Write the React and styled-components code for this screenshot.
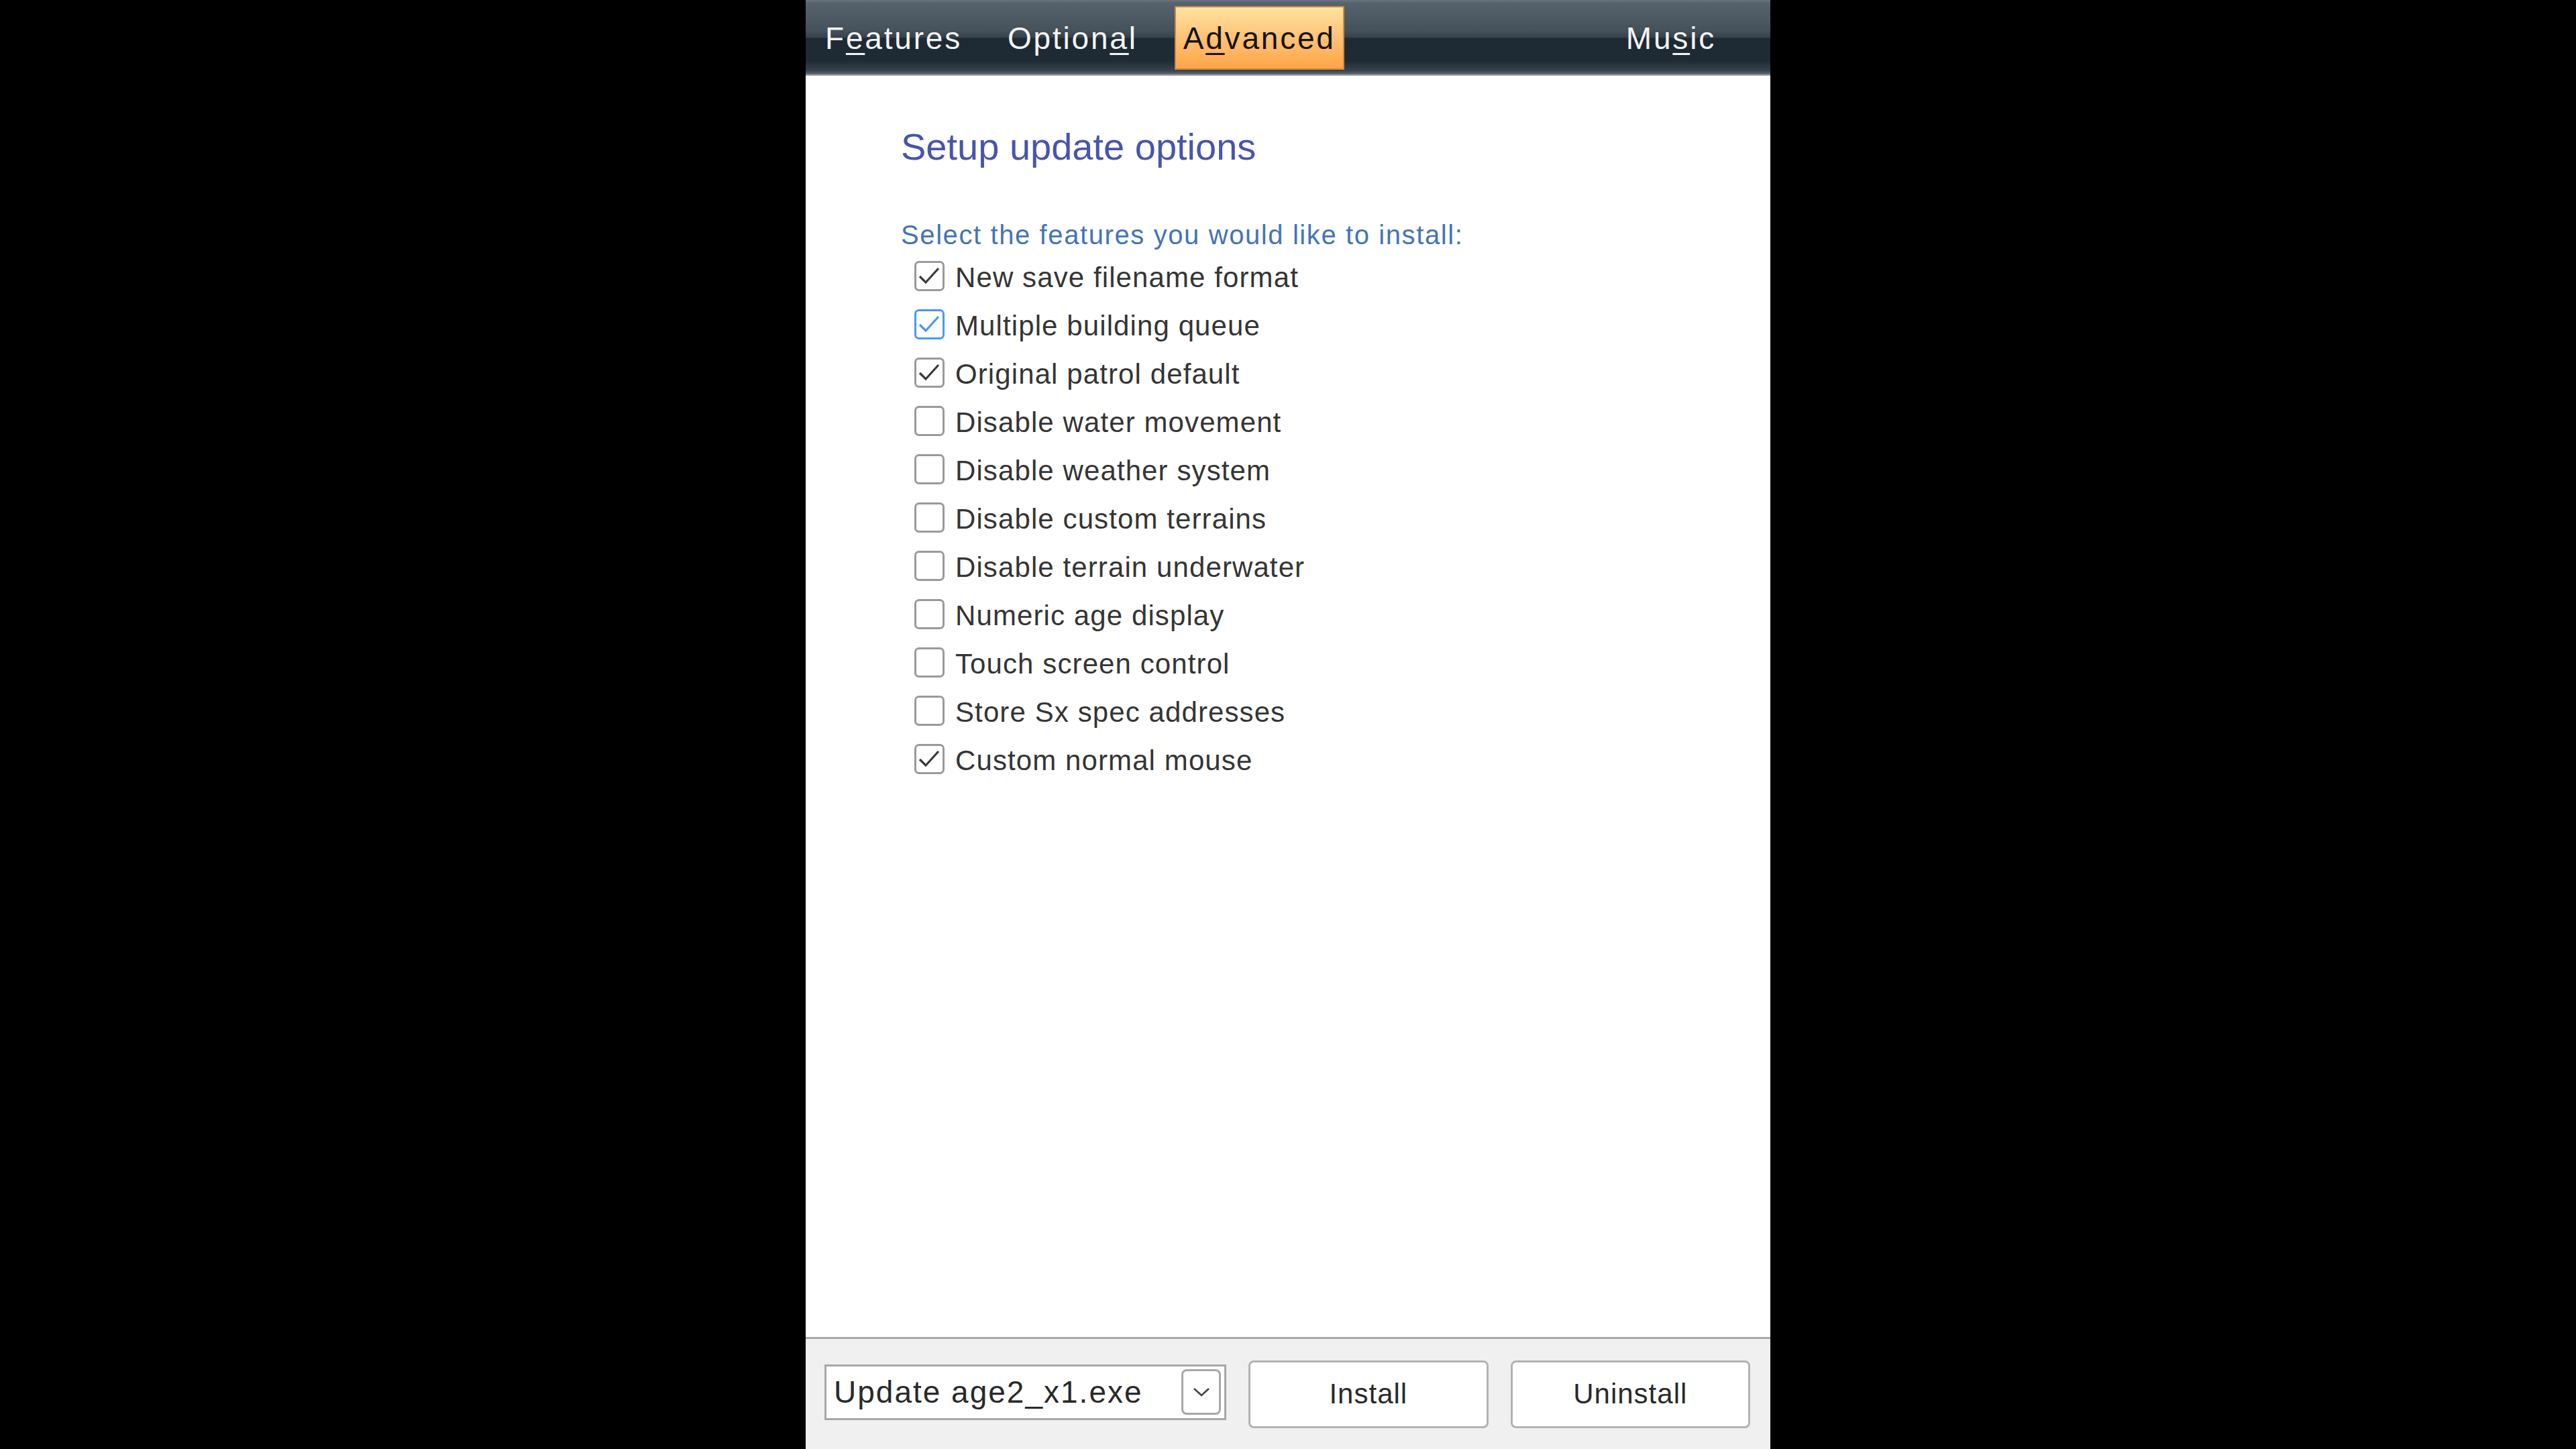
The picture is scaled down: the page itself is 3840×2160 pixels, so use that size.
import React from 'react';
import styled, { createGlobalStyle } from 'styled-components';

const GlobalStyle = createGlobalStyle`
  html, body {
    margin: 0;
    background: #000;
  }
`;

const Screen = styled.div`
  display: flex;
  justify-content: center;
  height: 100vh;
  background: #000;
  font-family: 'Liberation Sans', Arial, sans-serif;
`;

const Panel = styled.div`
  width: 1438px;
  display: flex;
  flex-direction: column;
  background: #fff;
`;

const TopBar = styled.nav`
  height: 113px;
  box-sizing: border-box;
  display: flex;
  align-items: center;
  gap: 42px;
  padding: 0 68px 0 16px;
  background: linear-gradient(
    to bottom,
    #6a757e 0%,
    #56626c 4%,
    #45515b 40%,
    #36424c 49%,
    #1e2a33 51%,
    #1f2b34 80%,
    #36424c 93%,
    #56616b 97%,
    #b9bcc6 100%
  );
`;

const Tab = styled.div`
  height: 95px;
  box-sizing: border-box;
  display: flex;
  align-items: center;
  padding: 0 11px;
  font-size: 46px;
  letter-spacing: 2.8px;
  color: ${(p) => (p.$active ? '#141414' : '#f4f4f4')};
  background: ${(p) =>
    p.$active ? 'linear-gradient(to bottom, #ffe39e, #ffc47a 45%, #ffa546)' : 'transparent'};
  border: 2px solid ${(p) => (p.$active ? '#c98a45' : 'transparent')};
  margin-left: ${(p) => (p.$end ? 'auto' : '0')};

  u {
    text-decoration-thickness: 3px;
    text-underline-offset: 6px;
  }
`;

const Content = styled.main`
  flex: 1;
  padding: 72px 0 0 142px;
`;

const Title = styled.h1`
  margin: 0;
  font-size: 56px;
  line-height: 67px;
  font-weight: normal;
  color: #4755ad;
`;

const Subtitle = styled.p`
  margin: 74px 0 0;
  font-size: 40px;
  line-height: 48px;
  letter-spacing: 1.6px;
  color: #4474b8;
`;

const List = styled.ul`
  list-style: none;
  margin: 4px 0 0;
  padding: 0 0 0 20px;
`;

const Row = styled.li`
  height: 72px;
  display: flex;
  align-items: center;
  gap: 16px;
`;

const Box = styled.span`
  width: 45px;
  height: 45px;
  box-sizing: border-box;
  border: 3px solid ${(p) => (p.$focus ? '#4a98f2' : '#9a9a9a')};
  border-radius: 7px;
  background: #fff;
  display: flex;
  align-items: center;
  justify-content: center;
  margin-top: -6px;
`;

const Label = styled.span`
  font-size: 42px;
  letter-spacing: 1.1px;
  color: #353535;
`;

const BottomBar = styled.footer`
  height: 167px;
  box-sizing: border-box;
  border-top: 3px solid #a9a9a9;
  background: #f0f0f0;
  display: flex;
  align-items: center;
  gap: 33px;
  padding: 0 30px 6px 28px;
`;

const Combo = styled.div`
  width: 600px;
  height: 83px;
  box-sizing: border-box;
  border: 3px solid #a8a8a8;
  background: #fff;
  display: flex;
  align-items: center;
  padding: 0 5px 0 11px;
  font-size: 46px;
  letter-spacing: 2px;
  color: #2a2a2a;
`;

const ComboArrow = styled.span`
  margin-left: auto;
  width: 59px;
  height: 68px;
  box-sizing: border-box;
  border: 3px solid #a8a8a8;
  border-radius: 8px;
  display: flex;
  align-items: center;
  justify-content: center;
`;

const Button = styled.button`
  width: 358px;
  height: 101px;
  border: 3px solid #b3b3b3;
  border-radius: 8px;
  background: #fff;
  font-family: 'Liberation Sans', Arial, sans-serif;
  font-size: 42px;
  letter-spacing: 1px;
  color: #2a2a2a;
  margin-top: 6px;
`;

const features = [
  { label: 'New save filename format', checked: true },
  { label: 'Multiple building queue', checked: true, focus: true },
  { label: 'Original patrol default', checked: true },
  { label: 'Disable water movement' },
  { label: 'Disable weather system' },
  { label: 'Disable custom terrains' },
  { label: 'Disable terrain underwater' },
  { label: 'Numeric age display' },
  { label: 'Touch screen control' },
  { label: 'Store Sx spec addresses' },
  { label: 'Custom normal mouse', checked: true },
];

const Check = ({ color }) => (
  <svg width="39" height="39" viewBox="0 0 39 39">
    <path d="M5 20 L14 29 L33 8" fill="none" stroke={color} strokeWidth="3.2" />
  </svg>
);

const Checkbox = ({ checked, focus }) => (
  <Box $focus={focus}>{checked && <Check color={focus ? '#4a98f2' : '#3a3a3a'} />}</Box>
);

const App = () => (
  <Screen>
    <GlobalStyle />
    <Panel>
      <TopBar>
        <Tab>
          F<u>e</u>atures
        </Tab>
        <Tab>
          Option<u>a</u>l
        </Tab>
        <Tab $active>
          A<u>d</u>vanced
        </Tab>
        <Tab $end>
          Mu<u>s</u>ic
        </Tab>
      </TopBar>
      <Content>
        <Title>Setup update options</Title>
        <Subtitle>Select the features you would like to install:</Subtitle>
        <List>
          {features.map((f) => (
            <Row key={f.label}>
              <Checkbox checked={f.checked} focus={f.focus} />
              <Label>{f.label}</Label>
            </Row>
          ))}
        </List>
      </Content>
      <BottomBar>
        <Combo>
          Update age2_x1.exe
          <ComboArrow>
            <svg width="26" height="16" viewBox="0 0 26 16">
              <path d="M2 3 L13 13 L24 3" fill="none" stroke="#444" strokeWidth="2.6" />
            </svg>
          </ComboArrow>
        </Combo>
        <Button>Install</Button>
        <Button>Uninstall</Button>
      </BottomBar>
    </Panel>
  </Screen>
);

export default App;
